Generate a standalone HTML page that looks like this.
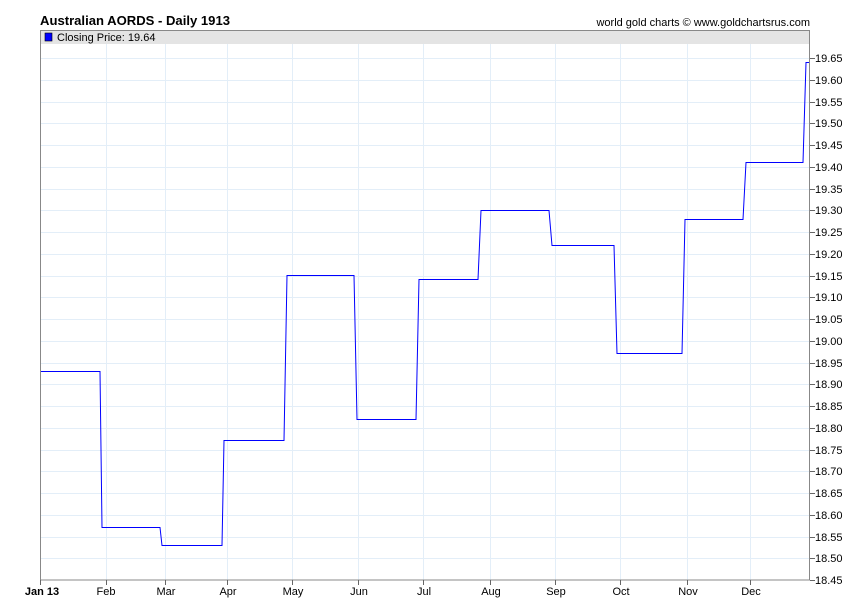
<!DOCTYPE html>
<html><head><style>
html,body{margin:0;padding:0;background:#fff;width:850px;height:616px;overflow:hidden}
svg text{font-family:"Liberation Sans",Arial,sans-serif}
</style></head><body>
<svg width="850" height="616" xmlns="http://www.w3.org/2000/svg">
<text x="40" y="25" font-size="13" font-weight="bold" fill="#000" textLength="190" lengthAdjust="spacingAndGlyphs">Australian AORDS - Daily 1913</text>
<text x="810" y="26" font-size="11" fill="#000" text-anchor="end">world gold charts © www.goldchartsrus.com</text>
<rect x="40" y="30" width="770" height="14" fill="#e4e4e4"/>
<g stroke="#e3eef8" stroke-width="1">
<line x1="40" y1="58.5" x2="810" y2="58.5"/><line x1="40" y1="80.5" x2="810" y2="80.5"/><line x1="40" y1="102.5" x2="810" y2="102.5"/><line x1="40" y1="123.5" x2="810" y2="123.5"/><line x1="40" y1="145.5" x2="810" y2="145.5"/><line x1="40" y1="167.5" x2="810" y2="167.5"/><line x1="40" y1="189.5" x2="810" y2="189.5"/><line x1="40" y1="210.5" x2="810" y2="210.5"/><line x1="40" y1="232.5" x2="810" y2="232.5"/><line x1="40" y1="254.5" x2="810" y2="254.5"/><line x1="40" y1="276.5" x2="810" y2="276.5"/><line x1="40" y1="297.5" x2="810" y2="297.5"/><line x1="40" y1="319.5" x2="810" y2="319.5"/><line x1="40" y1="341.5" x2="810" y2="341.5"/><line x1="40" y1="363.5" x2="810" y2="363.5"/><line x1="40" y1="384.5" x2="810" y2="384.5"/><line x1="40" y1="406.5" x2="810" y2="406.5"/><line x1="40" y1="428.5" x2="810" y2="428.5"/><line x1="40" y1="450.5" x2="810" y2="450.5"/><line x1="40" y1="471.5" x2="810" y2="471.5"/><line x1="40" y1="493.5" x2="810" y2="493.5"/><line x1="40" y1="515.5" x2="810" y2="515.5"/><line x1="40" y1="537.5" x2="810" y2="537.5"/><line x1="40" y1="558.5" x2="810" y2="558.5"/>
<line x1="106.5" y1="44" x2="106.5" y2="580"/><line x1="165.5" y1="44" x2="165.5" y2="580"/><line x1="227.5" y1="44" x2="227.5" y2="580"/><line x1="292.5" y1="44" x2="292.5" y2="580"/><line x1="358.5" y1="44" x2="358.5" y2="580"/><line x1="423.5" y1="44" x2="423.5" y2="580"/><line x1="490.5" y1="44" x2="490.5" y2="580"/><line x1="555.5" y1="44" x2="555.5" y2="580"/><line x1="620.5" y1="44" x2="620.5" y2="580"/><line x1="687.5" y1="44" x2="687.5" y2="580"/><line x1="750.5" y1="44" x2="750.5" y2="580"/>
</g>
<polyline fill="none" stroke="#0000ff" stroke-width="1" points="40,371.5 100,371.5 102,527.5 160,527.5 162,545.5 222,545.5 224,440.5 284,440.5 287,275.5 354,275.5 357,419.5 416,419.5 419,279.5 478,279.5 481,210.5 549,210.5 552,245.5 614,245.5 617,353.5 682,353.5 685,219.5 743,219.5 746,162.5 803,162.5 806,62.5 809,62.5"/>
<rect x="40.5" y="30.5" width="769" height="549.5" fill="none" stroke="#888"/>
<rect x="45" y="33" width="7" height="8" fill="#0000ff" stroke="#000" stroke-width="0.6"/>
<text x="57" y="41" font-size="11" fill="#000">Closing Price: 19.64</text>
<g stroke="#666">
<line x1="810" y1="58.5" x2="815" y2="58.5"/><line x1="810" y1="80.5" x2="815" y2="80.5"/><line x1="810" y1="102.5" x2="815" y2="102.5"/><line x1="810" y1="123.5" x2="815" y2="123.5"/><line x1="810" y1="145.5" x2="815" y2="145.5"/><line x1="810" y1="167.5" x2="815" y2="167.5"/><line x1="810" y1="189.5" x2="815" y2="189.5"/><line x1="810" y1="210.5" x2="815" y2="210.5"/><line x1="810" y1="232.5" x2="815" y2="232.5"/><line x1="810" y1="254.5" x2="815" y2="254.5"/><line x1="810" y1="276.5" x2="815" y2="276.5"/><line x1="810" y1="297.5" x2="815" y2="297.5"/><line x1="810" y1="319.5" x2="815" y2="319.5"/><line x1="810" y1="341.5" x2="815" y2="341.5"/><line x1="810" y1="363.5" x2="815" y2="363.5"/><line x1="810" y1="384.5" x2="815" y2="384.5"/><line x1="810" y1="406.5" x2="815" y2="406.5"/><line x1="810" y1="428.5" x2="815" y2="428.5"/><line x1="810" y1="450.5" x2="815" y2="450.5"/><line x1="810" y1="471.5" x2="815" y2="471.5"/><line x1="810" y1="493.5" x2="815" y2="493.5"/><line x1="810" y1="515.5" x2="815" y2="515.5"/><line x1="810" y1="537.5" x2="815" y2="537.5"/><line x1="810" y1="558.5" x2="815" y2="558.5"/><line x1="810" y1="580.5" x2="815" y2="580.5"/>
<line x1="40.5" y1="580" x2="40.5" y2="585"/><line x1="106.5" y1="580" x2="106.5" y2="585"/><line x1="165.5" y1="580" x2="165.5" y2="585"/><line x1="227.5" y1="580" x2="227.5" y2="585"/><line x1="292.5" y1="580" x2="292.5" y2="585"/><line x1="358.5" y1="580" x2="358.5" y2="585"/><line x1="423.5" y1="580" x2="423.5" y2="585"/><line x1="490.5" y1="580" x2="490.5" y2="585"/><line x1="555.5" y1="580" x2="555.5" y2="585"/><line x1="620.5" y1="580" x2="620.5" y2="585"/><line x1="687.5" y1="580" x2="687.5" y2="585"/><line x1="750.5" y1="580" x2="750.5" y2="585"/>
</g>
<g font-size="11" fill="#000">
<text x="815" y="62">19.65</text><text x="815" y="84">19.60</text><text x="815" y="106">19.55</text><text x="815" y="127">19.50</text><text x="815" y="149">19.45</text><text x="815" y="171">19.40</text><text x="815" y="193">19.35</text><text x="815" y="214">19.30</text><text x="815" y="236">19.25</text><text x="815" y="258">19.20</text><text x="815" y="280">19.15</text><text x="815" y="301">19.10</text><text x="815" y="323">19.05</text><text x="815" y="345">19.00</text><text x="815" y="367">18.95</text><text x="815" y="388">18.90</text><text x="815" y="410">18.85</text><text x="815" y="432">18.80</text><text x="815" y="454">18.75</text><text x="815" y="475">18.70</text><text x="815" y="497">18.65</text><text x="815" y="519">18.60</text><text x="815" y="541">18.55</text><text x="815" y="562">18.50</text><text x="815" y="584">18.45</text>
</g>
<g font-size="11" fill="#000" text-anchor="middle">
<text x="42" y="595" font-weight="bold">Jan 13</text><text x="106" y="595">Feb</text><text x="166" y="595">Mar</text><text x="228" y="595">Apr</text><text x="293" y="595">May</text><text x="359" y="595">Jun</text><text x="424" y="595">Jul</text><text x="491" y="595">Aug</text><text x="556" y="595">Sep</text><text x="621" y="595">Oct</text><text x="688" y="595">Nov</text><text x="751" y="595">Dec</text>
</g>
</svg>
</body></html>
